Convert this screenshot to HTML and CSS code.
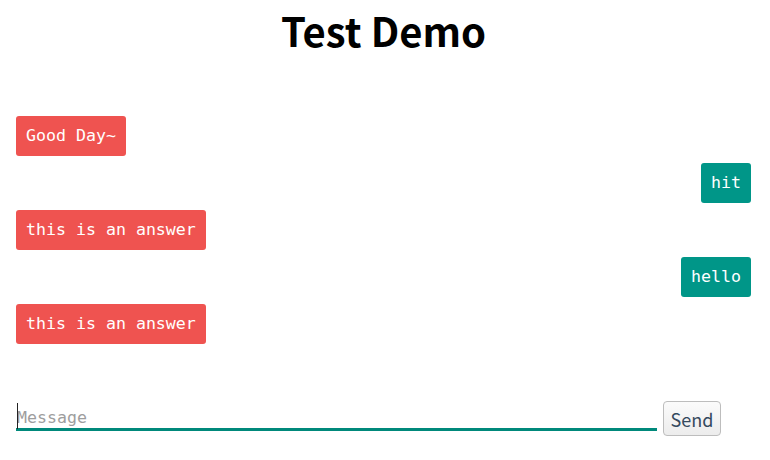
FILE: index.html
```html
<!DOCTYPE html>
<html>
<head>
<meta charset="utf-8">
<link rel="stylesheet" href="styles.css">
</head>
<body>
<div class="page">
  <h1 class="title">Test Demo</h1>
  <div class="chat">
    <div class="msg left">Good Day~</div>
    <div class="msg right">hit</div>
    <div class="msg left">this is an answer</div>
    <div class="msg right">hello</div>
    <div class="msg left">this is an answer</div>
  </div>
  <div class="composer">
    <div class="field-wrap">
      <input class="field" type="text" placeholder="Message">
    </div>
    <button class="send">Send</button>
  </div>
</div>
</body>
</html>
```
FILE: styles.css
```css
html, body {
  margin: 0;
  background: #ffffff;
}
.page {
  width: 770px;
  height: 460px;
  box-sizing: border-box;
  padding: 0 19px 0 16px;
  font-family: "Noto Sans CJK SC", "Noto Sans", sans-serif;
}
.title {
  margin: 0;
  padding-top: 4px;
  text-align: center;
  font-size: 40px;
  line-height: 52px;
  font-weight: 700;
  color: #000;
}
.chat {
  display: flex;
  flex-direction: column;
  gap: 7px;
  margin-top: 60px;
}
.msg {
  font-family: "DejaVu Sans Mono", monospace;
  font-size: 16.6px;
  line-height: 20px;
  padding: 10px;
  border-radius: 3px;
  color: #ffffff;
}
.left {
  align-self: flex-start;
  background: #ef5350;
}
.right {
  align-self: flex-end;
  background: #009688;
}
.composer {
  display: flex;
  align-items: flex-end;
  gap: 6px;
  margin-top: 57px;
}
.field-wrap {
  position: relative;
  width: 641px;
}
.field-wrap::before {
  content: "";
  position: absolute;
  left: 1px;
  top: 2px;
  width: 1px;
  height: 26px;
  background: #222;
}
.field {
  display: block;
  width: 100%;
  box-sizing: border-box;
  border: none;
  border-bottom: 3px solid #00897b;
  outline: none;
  padding: 5px 0 0 1px;
  font-family: "DejaVu Sans Mono", monospace;
  font-size: 16.6px;
  line-height: 22px;
  height: 30px;
  color: #333;
}
.field::placeholder {
  color: #9e9e9e;
}
.send {
  width: 58px;
  height: 35px;
  margin-bottom: -5px;
  padding: 0;
  border: 1px solid #bdbdbd;
  border-radius: 4px;
  background: linear-gradient(#fbfbfb, #ececec);
  font-family: "Noto Sans CJK SC", "Noto Sans", sans-serif;
  font-size: 18px;
  color: #34495e;
}
```
